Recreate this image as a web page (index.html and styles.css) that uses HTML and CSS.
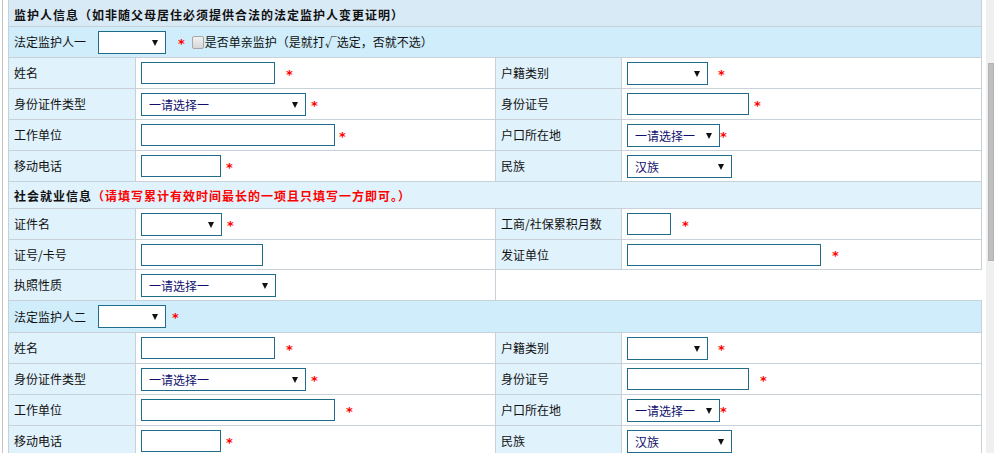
FILE: index.html
```html
<!DOCTYPE html>
<html lang="zh-CN">
<head>
<meta charset="utf-8">
<title>监护人信息</title>
<link rel="stylesheet" href="styles.css">
</head>
<body>
<div class="page">
  <div class="main">
    <table class="form">
      <colgroup>
        <col class="c1"><col class="c2"><col class="c3"><col class="c4">
      </colgroup>
      <tr class="hdr1">
        <td colspan="4"><b class="bold">监护人信息（如非随父母居住必须提供合法的法定监护人变更证明）</b></td>
      </tr>
      <tr class="sub">
        <td colspan="4">
          <div class="f">
            <span class="sublabel">法定监护人一</span>
            <span class="sel w68"><select><option></option></select></span>
            <span class="req g13">*</span>
            <input type="checkbox" class="chk">
            <span>是否单亲监护（是就打√选定，否就不选）</span>
          </div>
        </td>
      </tr>
      <tr>
        <td class="lbl">姓名</td>
        <td><div class="f"><input class="in w134" type="text"><span class="req g12">*</span></div></td>
        <td class="lbl">户籍类别</td>
        <td><div class="f"><span class="sel w81"><select><option></option></select></span><span class="req g11">*</span></div></td>
      </tr>
      <tr>
        <td class="lbl">身份证件类型</td>
        <td><div class="f"><span class="sel w165"><select><option>一请选择一</option></select></span><span class="req g6">*</span></div></td>
        <td class="lbl">身份证号</td>
        <td><div class="f"><input class="in w122" type="text"><span class="req g6">*</span></div></td>
      </tr>
      <tr>
        <td class="lbl">工作单位</td>
        <td><div class="f"><input class="in w194" type="text"><span class="req g5">*</span></div></td>
        <td class="lbl">户口所在地</td>
        <td><div class="f"><span class="sel w93"><select><option>一请选择一</option></select></span><span class="req g0">*</span></div></td>
      </tr>
      <tr>
        <td class="lbl">移动电话</td>
        <td><div class="f"><input class="in w80" type="text"><span class="req g6">*</span></div></td>
        <td class="lbl">民族</td>
        <td><div class="f"><span class="sel w105"><select><option>汉族</option></select></span></div></td>
      </tr>
      <tr class="hdr2">
        <td colspan="4"><b class="bold">社会就业信息</b><b class="bold red">（请填写累计有效时间最长的一项且只填写一方即可。）</b></td>
      </tr>
      <tr>
        <td class="lbl">证件名</td>
        <td><div class="f"><span class="sel w81"><select><option></option></select></span><span class="req g6">*</span></div></td>
        <td class="lbl">工商/社保累积月数</td>
        <td><div class="f"><input class="in w44" type="text"><span class="req g12">*</span></div></td>
      </tr>
      <tr class="short">
        <td class="lbl">证号/卡号</td>
        <td><div class="f"><input class="in w122" type="text"></div></td>
        <td class="lbl">发证单位</td>
        <td><div class="f"><input class="in w194" type="text"><span class="req g12">*</span></div></td>
      </tr>
      <tr>
        <td class="lbl">执照性质</td>
        <td><div class="f"><span class="sel w135"><select><option>一请选择一</option></select></span></div></td>
      </tr>
      <tr class="sub tall">
        <td colspan="4">
          <div class="f">
            <span class="sublabel">法定监护人二</span>
            <span class="sel w68"><select><option></option></select></span>
            <span class="req g7">*</span>
          </div>
        </td>
      </tr>
      <tr>
        <td class="lbl">姓名</td>
        <td><div class="f"><input class="in w134" type="text"><span class="req g12">*</span></div></td>
        <td class="lbl">户籍类别</td>
        <td><div class="f"><span class="sel w81"><select><option></option></select></span><span class="req g11">*</span></div></td>
      </tr>
      <tr>
        <td class="lbl">身份证件类型</td>
        <td><div class="f"><span class="sel w165"><select><option>一请选择一</option></select></span><span class="req g6">*</span></div></td>
        <td class="lbl">身份证号</td>
        <td><div class="f"><input class="in w122" type="text"><span class="req g12">*</span></div></td>
      </tr>
      <tr>
        <td class="lbl">工作单位</td>
        <td><div class="f"><input class="in w194" type="text"><span class="req g12">*</span></div></td>
        <td class="lbl">户口所在地</td>
        <td><div class="f"><span class="sel w93"><select><option>一请选择一</option></select></span><span class="req g0">*</span></div></td>
      </tr>
      <tr>
        <td class="lbl">移动电话</td>
        <td><div class="f"><input class="in w80" type="text"><span class="req g6">*</span></div></td>
        <td class="lbl">民族</td>
        <td><div class="f"><span class="sel w105"><select><option>汉族</option></select></span></div></td>
      </tr>
    </table>
  </div>
  <div class="scroll"><div class="thumb"></div></div>
</div>
</body>
</html>
```
FILE: styles.css
```css
* { box-sizing: border-box; }
html, body { margin: 0; padding: 0; height: 100%; overflow: hidden; background: #fff; }
body {
  font-family: "Noto Sans CJK SC", "Liberation Sans", sans-serif;
  font-size: 12px;
  color: #111;
}
.page { display: flex; height: 453px; }
.main {
  flex: 1;
  margin-left: 2px;
  border-left: 1px solid #c4c4c4;
  padding-left: 5px;
  overflow: hidden;
}
.scroll { width: 8px; background: #f0f0f0; padding-left: 2px; }
.thumb { margin-top: 63px; height: 198px; background: #bfbfbf; border: 1px solid #b3b3b3; }

.form { border-collapse: collapse; table-layout: fixed; width: 973px; }
.c1 { width: 127px; }
.c2 { width: 360px; }
.c3 { width: 126px; }
.c4 { width: 360px; }

.form td {
  box-sizing: content-box;
  border: 1px solid #c9d1d8;
  padding: 0 5px;
  height: 30px;
  vertical-align: middle;
  white-space: nowrap;
  line-height: 16px;
}
.form .hdr1 td {
  border-top: none;
  background: #d9eaf7;
  height: 22px;
  padding-top: 4px;
}
.form .hdr2 td { background: #e0f2fb; height: 25px; padding-top: 1px; }
.form .sub td { background: #cfedfa; }
.form .tall td { height: 31px; }
.form .short td { height: 29px; }
.form td.lbl { background: #e0f2fb; }

.bold { font-weight: bold; letter-spacing: 1px; color: #111; }
.red { color: #f00; }

.f { display: flex; align-items: center; }
.sublabel { width: 84px; }

.in {
  height: 22px;
  border: 1px solid #1f6d8b;
  padding: 0 3px;
  margin: 0;
  background: #fff;
  font: inherit;
}
.sel { position: relative; display: inline-block; }
.sel select {
  appearance: none;
  -webkit-appearance: none;
  width: 100%;
  height: 23px;
  border: 1px solid #1f6d8b;
  border-radius: 0;
  background: #fff;
  padding: 0 0 0 7px;
  margin: 0;
  font-family: "Noto Sans CJK SC", "Liberation Sans", sans-serif;
  font-size: 12px;
  color: #10106e;
  display: block;
}
.sel::after {
  content: "";
  position: absolute;
  right: 8px;
  top: 9px;
  border-left: 3px solid transparent;
  border-right: 3px solid transparent;
  border-top: 6px solid #111;
  pointer-events: none;
}
.w44 { width: 44px; }
.w68 { width: 68px; }
.w80 { width: 80px; }
.w81 { width: 81px; }
.w93 { width: 93px; }
.w105 { width: 105px; }
.w122 { width: 122px; }
.w134 { width: 134px; }
.w135 { width: 135px; }
.w165 { width: 165px; }
.w194 { width: 194px; }

.req {
  color: #f00;
  font-family: "DejaVu Sans", "Liberation Sans", sans-serif;
  font-weight: bold;
  font-size: 13px;
  line-height: 13px;
  padding-top: 2px;
}
.g0 { margin-left: 0; }
.g5 { margin-left: 4px; }
.g6 { margin-left: 5px; }
.g7 { margin-left: 6px; }
.g11 { margin-left: 10px; }
.g12 { margin-left: 11px; }
.g13 { margin-left: 12px; }

.chk {
  appearance: none;
  -webkit-appearance: none;
  width: 12px;
  height: 13px;
  margin: 0 1px 0 7px;
  border: 1px solid #a8a8a8;
  border-radius: 2px;
  background: linear-gradient(#f2f2f2, #d6d6d6);
}
```
